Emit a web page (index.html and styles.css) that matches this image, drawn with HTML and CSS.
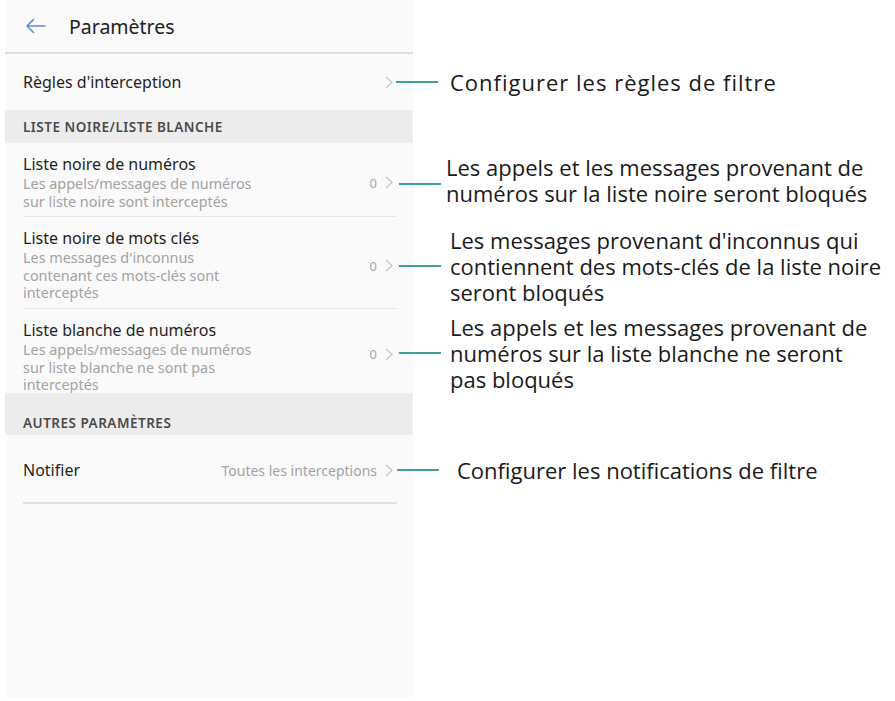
FILE: index.html
```html
<!DOCTYPE html>
<html lang="fr">
<head>
<meta charset="utf-8">
<link rel="stylesheet" href="styles.css">
</head>
<body>
<div class="page">
  <div class="line">
    <div class="cell header">
      <svg class="back" width="21" height="16" viewBox="0 0 21 16"><path d="M20 8H2M8.5 1.5L2 8l6.5 6.5" fill="none" stroke="#5d8fd0" stroke-width="1.6" stroke-linecap="round" stroke-linejoin="round"/></svg>
      <span class="title">Paramètres</span>
    </div>
  </div>

  <div class="line">
    <div class="cell h-rules">
      <div class="inner">
        <div class="texts"><div class="row-title">Règles d'interception</div></div>
        <div class="value"><svg class="chev" width="8" height="13" viewBox="0 0 8 13"><path d="M1 1l6 5.5L1 12" fill="none" stroke="#c6c6c6" stroke-width="1.3"/></svg></div>
      </div>
    </div>
    <div class="note n1"><span class="conn"></span><span class="ntext">Configurer les règles de filtre</span></div>
  </div>

  <div class="line">
    <div class="cell section s1"><span>LISTE NOIRE/LISTE BLANCHE</span></div>
  </div>

  <div class="line">
    <div class="cell h-r2">
      <div class="inner top sep">
        <div class="texts">
          <div class="row-title">Liste noire de numéros</div>
          <div class="row-sub">Les appels/messages de numéros<br>sur liste noire sont interceptés</div>
        </div>
        <div class="value"><span class="num">0</span><svg class="chev" width="8" height="13" viewBox="0 0 8 13"><path d="M1 1l6 5.5L1 12" fill="none" stroke="#c6c6c6" stroke-width="1.3"/></svg></div>
      </div>
    </div>
    <div class="note n2"><span class="conn"></span><span class="ntext">Les appels et les messages provenant de<br>numéros sur la liste noire seront bloqués</span></div>
  </div>

  <div class="line">
    <div class="cell h-r3">
      <div class="inner top sep">
        <div class="texts">
          <div class="row-title">Liste noire de mots clés</div>
          <div class="row-sub">Les messages d'inconnus<br>contenant ces mots-clés sont<br>interceptés</div>
        </div>
        <div class="value"><span class="num">0</span><svg class="chev" width="8" height="13" viewBox="0 0 8 13"><path d="M1 1l6 5.5L1 12" fill="none" stroke="#c6c6c6" stroke-width="1.3"/></svg></div>
      </div>
    </div>
    <div class="note n3"><span class="conn"></span><span class="ntext">Les messages provenant d'inconnus qui<br>contiennent des mots-clés de la liste noire<br>seront bloqués</span></div>
  </div>

  <div class="line">
    <div class="cell h-r4">
      <div class="inner top">
        <div class="texts">
          <div class="row-title">Liste blanche de numéros</div>
          <div class="row-sub">Les appels/messages de numéros<br>sur liste blanche ne sont pas<br>interceptés</div>
        </div>
        <div class="value"><span class="num">0</span><svg class="chev" width="8" height="13" viewBox="0 0 8 13"><path d="M1 1l6 5.5L1 12" fill="none" stroke="#c6c6c6" stroke-width="1.3"/></svg></div>
      </div>
    </div>
    <div class="note n4"><span class="conn"></span><span class="ntext">Les appels et les messages provenant de<br>numéros sur la liste blanche ne seront<br>pas bloqués</span></div>
  </div>

  <div class="line">
    <div class="cell section s2"><span>AUTRES PARAMÈTRES</span></div>
  </div>

  <div class="line">
    <div class="cell h-notif">
      <div class="inner sep2">
        <div class="texts"><div class="row-title">Notifier</div></div>
        <div class="value"><span class="vtext">Toutes les interceptions</span><svg class="chev" width="8" height="13" viewBox="0 0 8 13"><path d="M1 1l6 5.5L1 12" fill="none" stroke="#c6c6c6" stroke-width="1.3"/></svg></div>
      </div>
    </div>
    <div class="note n5"><span class="conn"></span><span class="ntext">Configurer les notifications de filtre</span></div>
  </div>

  <div class="line fill">
    <div class="cell"></div>
  </div>
</div>
</body>
</html>
```

FILE: styles.css
```css
html, body {
  margin: 0;
  padding: 0;
  background: #ffffff;
}
body {
  width: 895px;
  height: 701px;
  overflow: hidden;
  font-family: "Noto Sans", Roboto, "Liberation Sans", sans-serif;
}
.page {
  display: flex;
  flex-direction: column;
  height: 698px;
  padding-left: 5px;
}
.line {
  display: flex;
  flex: none;
}
.line.fill {
  flex: 1;
}
.cell {
  width: 408px;
  flex: none;
  box-sizing: border-box;
  background: #fafafa;
}
.header {
  height: 54px;
  border-bottom: 2px solid #dedede;
  display: flex;
  align-items: center;
  padding-left: 20px;
}
.back {
  display: block;
}
.title {
  margin-left: 23px;
  font-size: 19.5px;
  color: #202020;
}
.inner {
  height: 100%;
  box-sizing: border-box;
  margin: 0 16px 0 18px;
  padding-right: 4px;
  display: flex;
  align-items: center;
  justify-content: space-between;
}
.inner.top {
  padding-top: 10px;
  align-items: flex-start;
}
.inner.top .value {
  align-self: center;
  margin-top: -4px;
}
.inner.sep {
  border-bottom: 1px solid #e8e8e8;
}
.inner.sep2 {
  border-bottom: 2px solid #e0e0e0;
  padding-top: 3px;
}
.h-rules { height: 56px; }
.h-r2 { height: 74px; }
.h-r3 { height: 92px; }
.h-r4 { height: 84px; }
.h-notif { height: 69px; }
.row-title {
  font-size: 16px;
  line-height: 22px;
  color: #1f1f1f;
}
.row-sub {
  font-size: 14.4px;
  line-height: 17.5px;
  color: #a2a2a2;
}
.value {
  display: flex;
  align-items: center;
  gap: 8px;
  color: #a8a8a8;
  font-size: 13px;
}
.vtext {
  font-size: 14px;
  color: #a4a4a4;
}
.chev {
  display: block;
}
.section {
  background: #ececec;
  display: flex;
  align-items: flex-end;
  padding-left: 18px;
  font-size: 13.5px;
  font-weight: 600;
  letter-spacing: 0.5px;
  color: #4a4a4a;
  line-height: 16px;
}
.s1 { height: 33px; padding-bottom: 8px; }
.s2 { height: 42px; padding-bottom: 4px; }
.note {
  flex: 1;
  display: flex;
  align-items: center;
  margin-left: -17px;
  font-family: "Open Sans", "Noto Sans", sans-serif;
  font-size: 22px;
  line-height: 26px;
  color: #1a1a1a;
}
.conn {
  flex: none;
  width: 42px;
  height: 2px;
  background: #3f9f9c;
}
.ntext {
  white-space: nowrap;
}
.n1 .ntext { margin-left: 12px; letter-spacing: 1px; }
.n2 .conn { margin-left: 3px; margin-top: 8px; }
.n2 .ntext { margin-left: 5px; }
.n3 .conn { margin-left: 3px; }
.n3 { padding-top: 6px; }
.n3 .ntext { margin-left: 9px; }
.n4 .conn { margin-left: 3px; }
.n4 .ntext { margin-left: 9px; }
.n4 { padding-top: 4px; }
.n5 .conn { margin-left: 1px; }
.n5 .ntext { margin-left: 18px; }
```
